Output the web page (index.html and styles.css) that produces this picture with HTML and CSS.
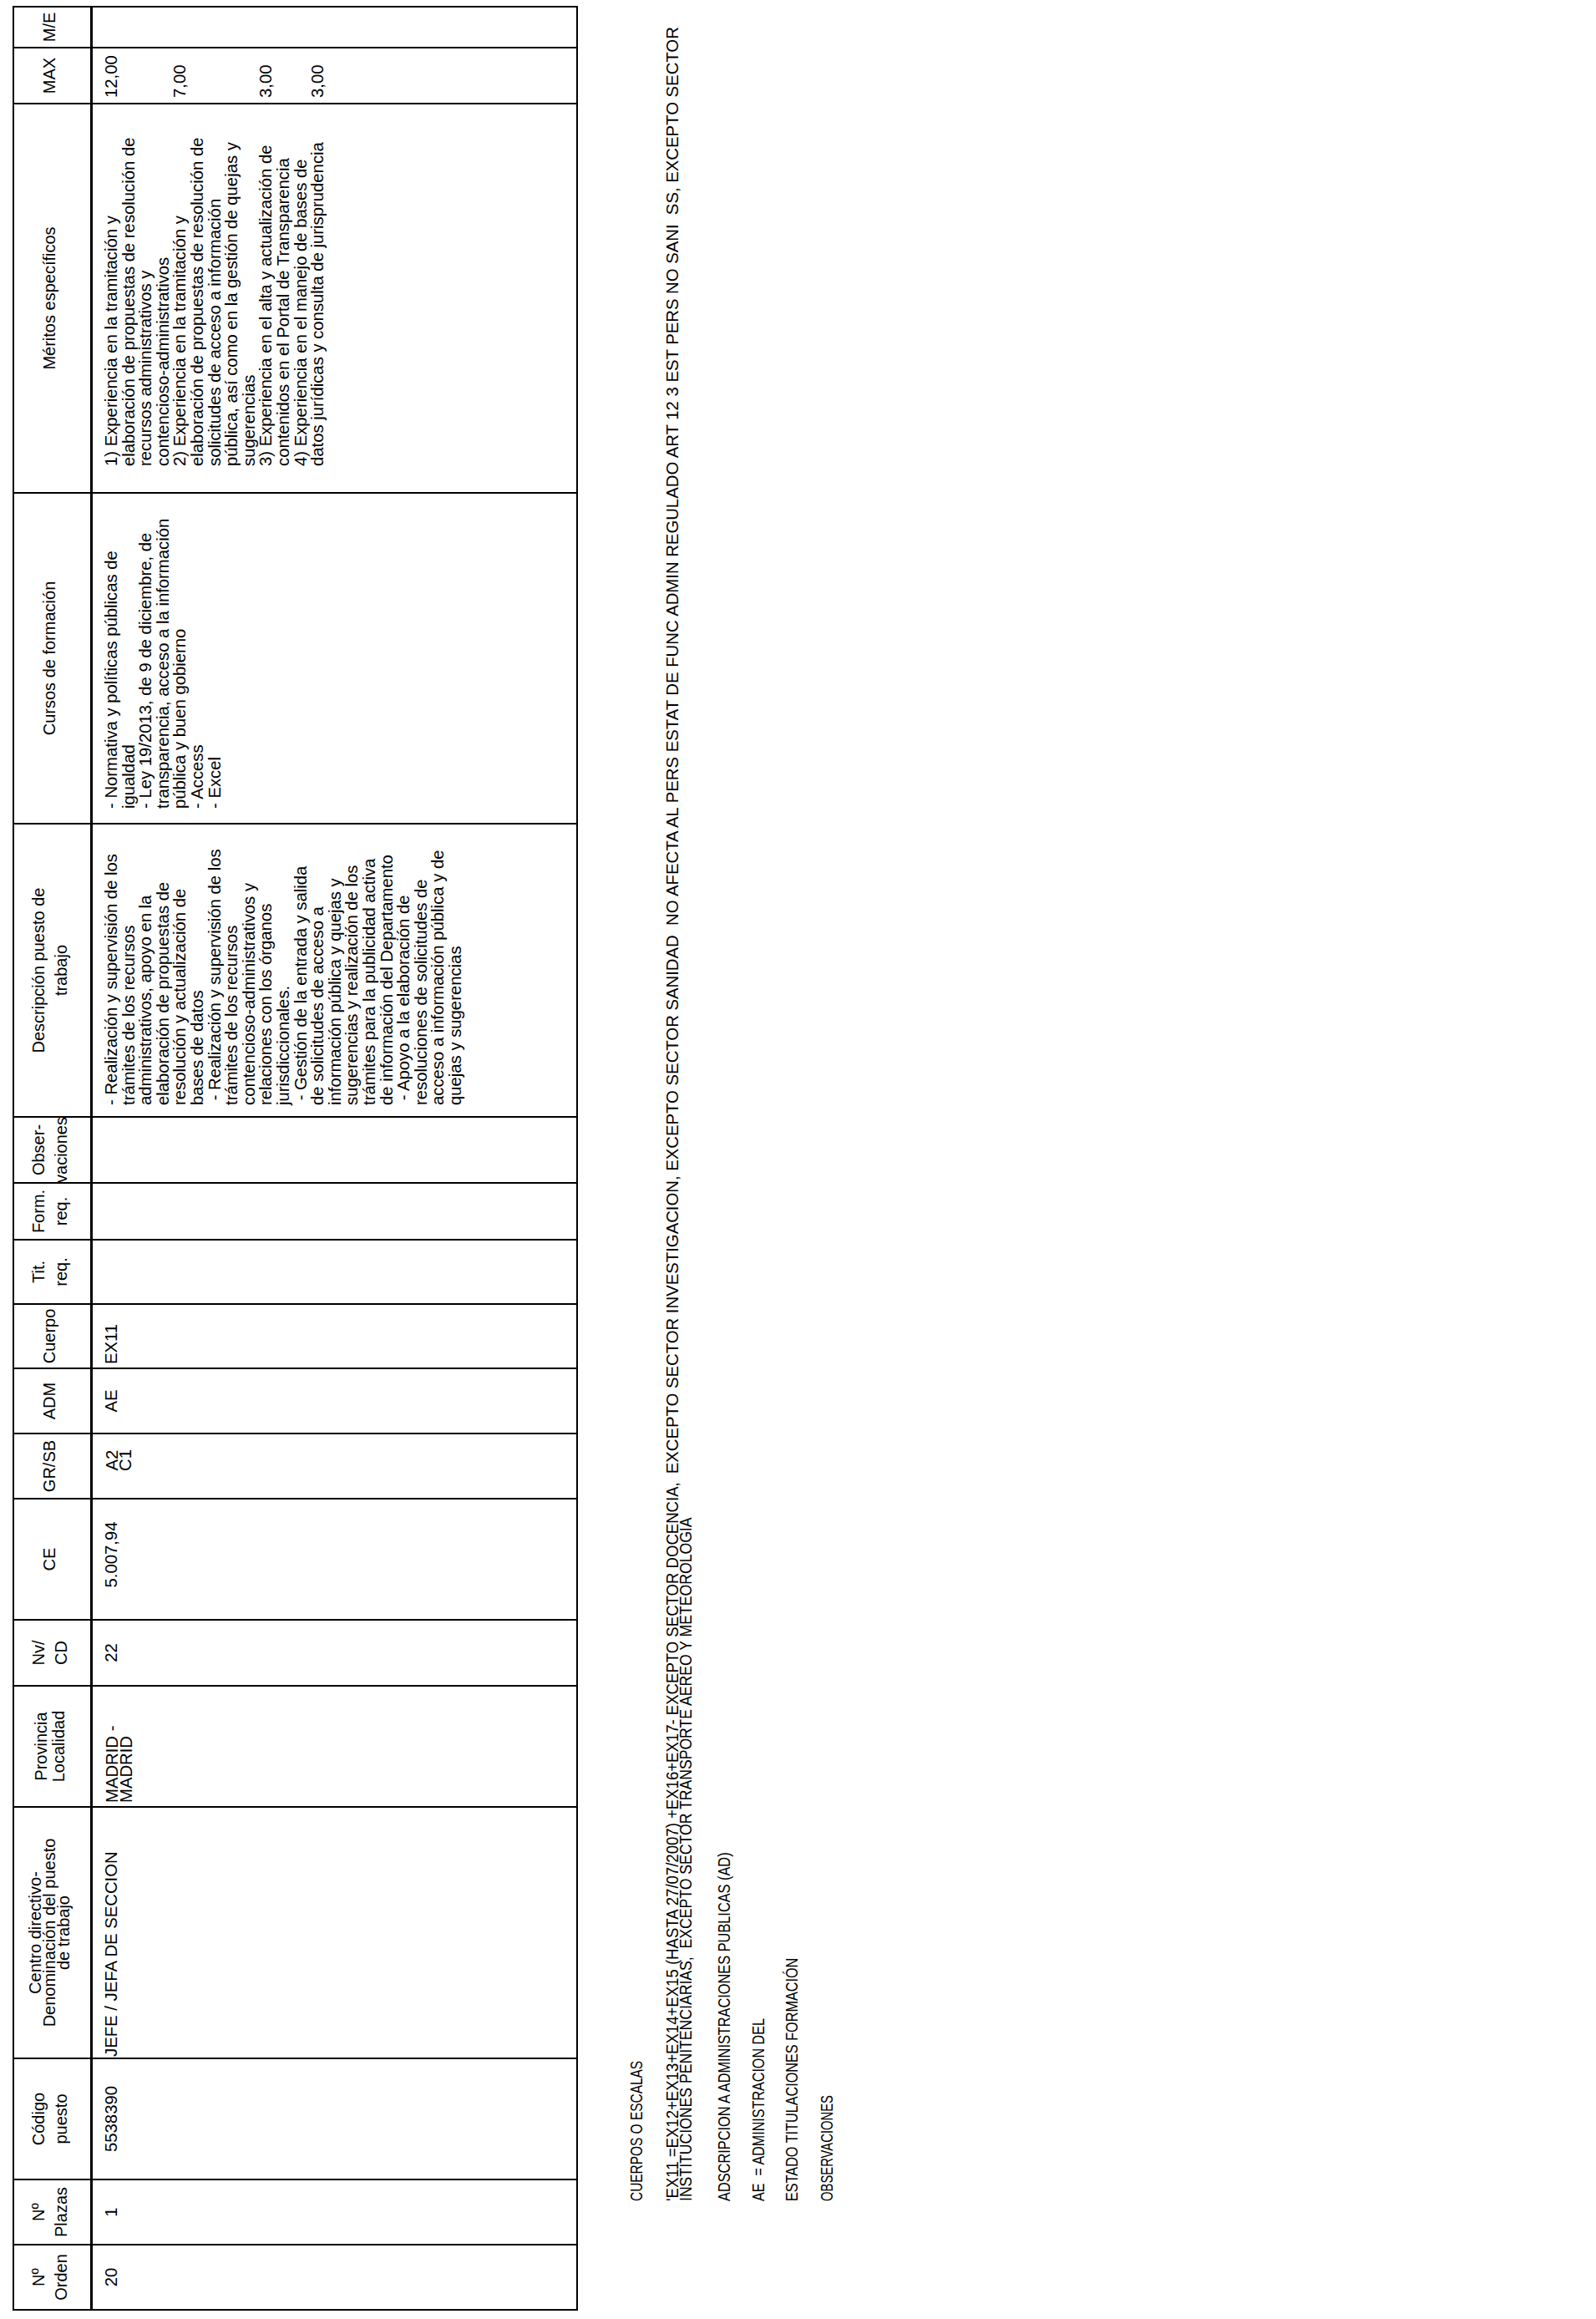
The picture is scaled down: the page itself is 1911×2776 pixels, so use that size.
FILE: index.html
```html
<!DOCTYPE html>
<html lang="es">
<head>
<meta charset="utf-8">
<title>Puesto 5538390</title>
<link rel="stylesheet" href="styles.css">
</head>
<body>
<div class="viewport">
  <div class="page">
    <div class="grid">
      <div class="th"><span>Nº<br>Orden</span></div>
      <div class="th"><span>Nº<br>Plazas</span></div>
      <div class="th"><span>Código<br>puesto</span></div>
      <div class="th th-tight"><span>Centro directivo-<br>Denominación del puesto<br>de trabajo</span></div>
      <div class="th th-mid"><span>Provincia<br>Localidad</span></div>
      <div class="th"><span>Nv/<br>CD</span></div>
      <div class="th"><span>CE</span></div>
      <div class="th"><span>GR/SB</span></div>
      <div class="th"><span>ADM</span></div>
      <div class="th"><span>Cuerpo</span></div>
      <div class="th"><span>Tit.<br>req.</span></div>
      <div class="th"><span>Form.<br>req.</span></div>
      <div class="th th-clip"><span>Obser-<br>vaciones</span></div>
      <div class="th"><span>Descripción puesto de<br>trabajo</span></div>
      <div class="th"><span>Cursos de formación</span></div>
      <div class="th"><span>Méritos específicos</span></div>
      <div class="th"><span>MAX</span></div>
      <div class="th"><span>M/E</span></div>

      <div class="td center">20</div>
      <div class="td center">1</div>
      <div class="td center">5538390</div>
      <div class="td pad-1">JEFE / JEFA DE SECCION</div>
      <div class="td pad-4 tight17">MADRID -<br>MADRID</div>
      <div class="td center">22</div>
      <div class="td center shift-11">5.007,94</div>
      <div class="td center shift-14 tight15">A2<br>C1</div>
      <div class="td center">AE</div>
      <div class="td pad-4">EX11</div>
      <div class="td"></div>
      <div class="td"></div>
      <div class="td"></div>
      <div class="td pad-13">- Realización y supervisión de los<br>trámites de los recursos<br>administrativos, apoyo en la<br>elaboración de propuestas de<br>resolución y actualización de<br>bases de datos<br>&nbsp;- Realización y supervisión de los<br>trámites de los recursos<br>contencioso-administrativos y<br>relaciones con los órganos<br>jurisdiccionales.<br>&nbsp;- Gestión de la entrada y salida<br>de solicitudes de acceso a<br>información pública y quejas y<br>sugerencias y realización de los<br>trámites para la publicidad activa<br>de información del Departamento<br>&nbsp;- Apoyo a la elaboración de<br>resoluciones de solicitudes de<br>acceso a información pública y de<br>quejas y sugerencias</div>
      <div class="td pad-17">- Normativa y políticas públicas de<br>igualdad<br>- Ley 19/2013, de 9 de diciembre, de<br>transparencia, acceso a la información<br>pública y buen gobierno<br>- Access<br>- Excel</div>
      <div class="td pad-31">1) Experiencia en la tramitación y<br>elaboración de propuestas de resolución de<br>recursos administrativos y<br>contencioso-administrativos<br>2) Experiencia en la tramitación y<br>elaboración de propuestas de resolución de<br>solicitudes de acceso a información<br>pública, así como en la gestión de quejas y<br>sugerencias<br>3) Experiencia en el alta y actualización de<br>contenidos en el Portal de Transparencia<br>4) Experiencia en el manejo de bases de<br>datos jurídicas y consulta de jurisprudencia</div>
      <div class="td pad-6">12,00<br><br><br><br>7,00<br><br><br><br><br>3,00<br><br><br>3,00</div>
      <div class="td"></div>
    </div>

    <div class="notes">
      <div class="note"><span class="s1">CUERPOS O ESCALAS</span></div>
      <div class="note n2"><span class="part part-a"><span class="s2a">'EX11 =EX12+EX13+EX14+EX15 (HASTA 27/07/2007) +EX16+EX17- EXCEPTO SECTOR DOCENCIA,</span></span><span class="part"><span class="s2b">&nbsp;EXCEPTO SECTOR INVESTIGACION, EXCEPTO SECTOR SANIDAD&nbsp; NO AFECTA AL PERS ESTAT DE FUNC ADMIN REGULADO ART 12 3 EST PERS NO SANI&nbsp; SS, EXCEPTO SECTOR</span></span></div>
      <div class="note"><span class="s3">INSTITUCIONES PENITENCIARIAS,&nbsp; EXCEPTO SECTOR TRANSPORTE AEREO Y METEOROLOGIA</span></div>
      <div class="note n4"><span class="s4">ADSCRIPCION A ADMINISTRACIONES PUBLICAS (AD)</span></div>
      <div class="note n5"><span class="s5">AE&nbsp; = ADMINISTRACION DEL</span></div>
      <div class="note n6"><span class="s6">ESTADO TITULACIONES FORMACIÓN</span></div>
      <div class="note n7"><span class="s7">OBSERVACIONES</span></div>
    </div>
  </div>
</div>
</body>
</html>
```

FILE: styles.css
```css
html, body {
  margin: 0;
  padding: 0;
  background: #fff;
}

.viewport {
  width: 1911px;
  height: 2776px;
  overflow: hidden;
}

.page {
  width: 2776px;
  height: 1911px;
  box-sizing: border-box;
  padding: 15px 0 0 10px;
  transform: translateY(2776px) rotate(-90deg);
  transform-origin: 0 0;
  font-family: "Liberation Sans", Arial, sans-serif;
  color: #000;
}

.grid {
  display: grid;
  width: max-content;
  grid-template-columns: 76px 76px 143px 299px 143px 77px 143px 76px 76px 75px 75px 66px 77px 349px 394px 464px 65px 47px;
  grid-template-rows: 91px 579px;
  column-gap: 2px;
  row-gap: 3px;
  padding: 2px;
  background: #000;
}

.th {
  background: #fff;
  display: flex;
  align-items: center;
  justify-content: center;
  text-align: center;
  font-size: 20px;
  line-height: 27px;
  padding-bottom: 6px;
  box-sizing: border-box;
  white-space: nowrap;
  overflow: visible;
}

.th-tight {
  line-height: 17px;
}

.th-mid {
  line-height: 21px;
}

.th-clip {
  overflow: hidden;
}

.td {
  background: #fff;
  font-size: 20.3px;
  line-height: 20.6px;
  padding-top: 12px;
  box-sizing: border-box;
  white-space: nowrap;
}

.center {
  text-align: center;
}

.pad-1 { padding-left: 1px; }
.pad-4 { padding-left: 4px; }
.pad-6 { padding-left: 6px; }
.pad-13 { padding-left: 13px; }
.pad-17 { padding-left: 17px; }
.pad-31 { padding-left: 31px; }

.shift-11 { padding-left: 11px; }
.shift-14 { padding-left: 14px; }

.tight17 {
  line-height: 17px;
  padding-top: 15px;
}

.tight15 {
  line-height: 16px;
  padding-top: 15px;
}

.notes {
  padding-left: 131px;
  margin-top: 62px;
  font-size: 21px;
}

.note {
  height: 16px;
  line-height: 16px;
  white-space: nowrap;
}

.note span {
  display: inline-block;
  transform-origin: 0 50%;
}

.note .part {
  transform: none;
}

.note .part-a {
  width: 865px;
}

.s1 { transform: scaleX(0.735); }
.s2a { transform: scaleX(0.884); }
.s2b { transform: scaleX(0.967); }
.s3 { transform: scaleX(0.839); }
.s4 { transform: scaleX(0.778); }
.s5 { transform: scaleX(0.767); }
.s6 { transform: scaleX(0.772); }
.s7 { transform: scaleX(0.705); }

.n2 { margin-top: 27px; }
.n4 { margin-top: 30px; }
.n5 { margin-top: 25px; }
.n6 { margin-top: 24px; }
.n7 { margin-top: 26px; }
```
